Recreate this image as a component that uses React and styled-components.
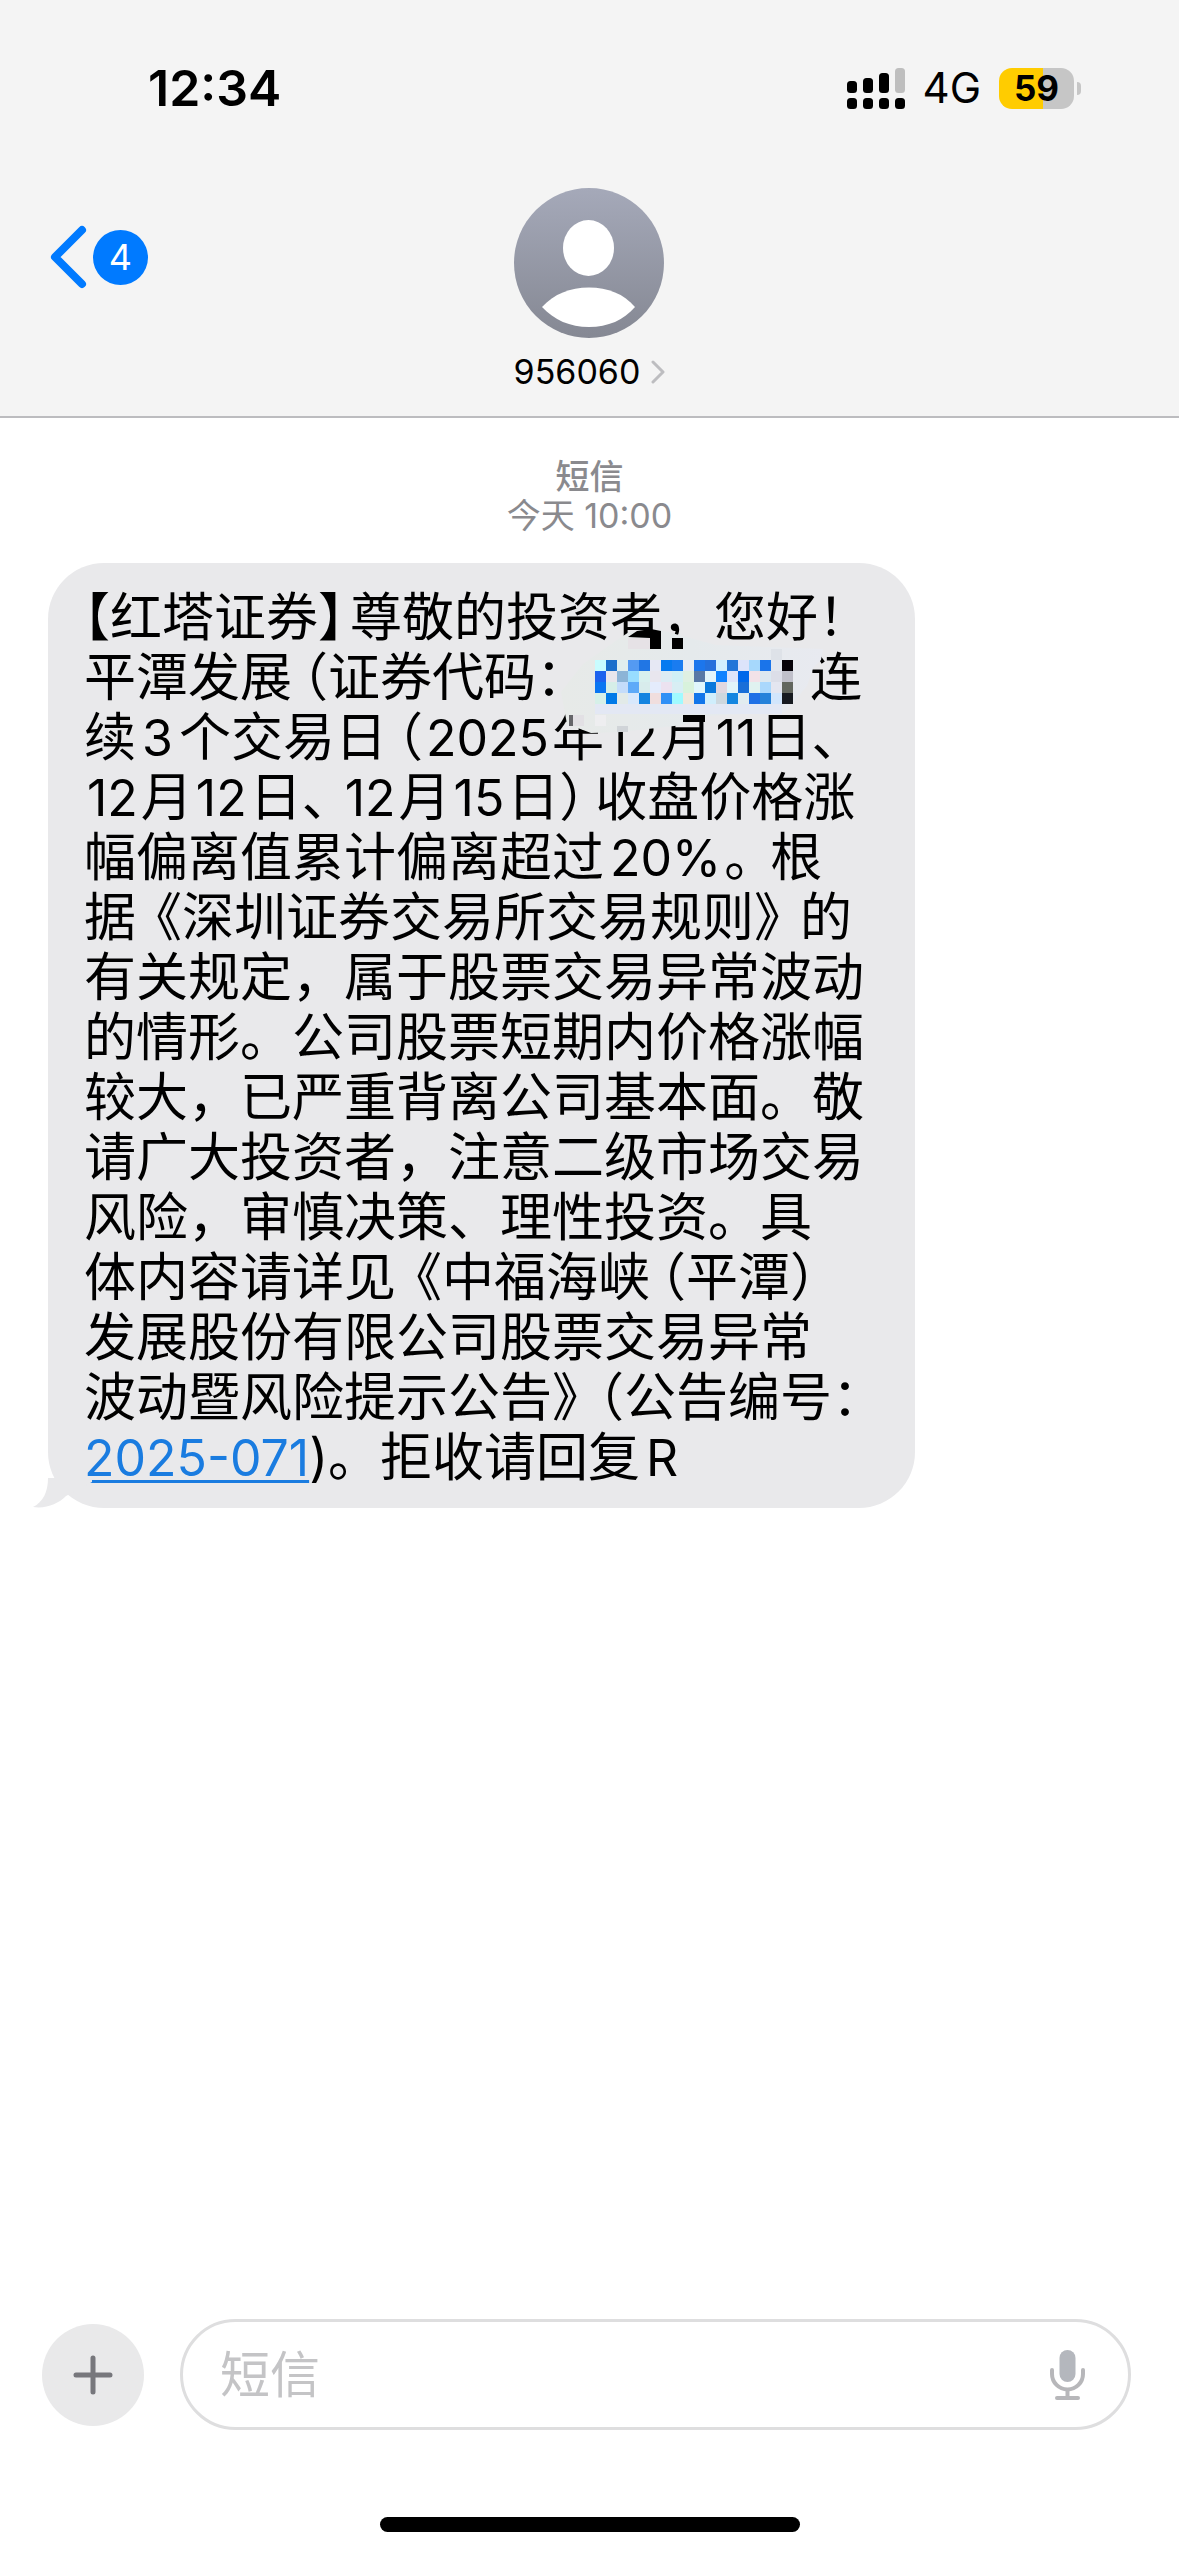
import React from 'react';
import styled, { createGlobalStyle } from 'styled-components';

const GlobalStyle = createGlobalStyle`
  * {
    box-sizing: border-box;
  }

  body {
    margin: 0;
    background: #FFFFFF;
    color: #000000;
    font-family: Inter, "Noto Sans CJK SC", sans-serif;
  }

  button, input {
    font: inherit;
    color: inherit;
  }
`;

const Screen = styled.div`
  min-height: 100vh;
  display: flex;
  flex-direction: column;
`;

const Header = styled.header`
  background: #F4F4F4;
  border-bottom: 2px solid #BCBCBF;
  padding-bottom: 24px;
`;

const StatusBar = styled.div`
  display: flex;
  align-items: center;
  justify-content: space-between;
  height: 176px;
  padding: 0 98px 0 148px;
`;

const Clock = styled.span`
  font-size: 50px;
  font-weight: 600;
`;

const StatusIcons = styled.div`
  display: flex;
  align-items: center;
  gap: 18px;
`;

const Network = styled.span`
  font-size: 42px;
  line-height: 42px;
`;

const BatteryWrap = styled.div`
  display: flex;
  align-items: center;
  gap: 3px;
`;

const BatteryBody = styled.div`
  width: 75px;
  height: 41px;
  border-radius: 13px;
  background: linear-gradient(to right, #FFCC00 59%, #C6C6C6 59%);
  font-size: 35px;
  font-weight: 700;
  line-height: 41px;
  text-align: center;
`;

const BatteryTip = styled.div`
  width: 4px;
  height: 13px;
  border-radius: 0 4px 4px 0;
  background: #C6C6C6;
`;

const NavBar = styled.div`
  display: grid;
  grid-template-columns: 1fr auto 1fr;
  align-items: start;
  padding: 12px 47px 0;
`;

const BackButton = styled.button`
  display: flex;
  align-items: center;
  gap: 5px;
  justify-self: start;
  margin-top: 36px;
  padding: 0;
  border: 0;
  background: none;
`;

const UnreadBadge = styled.span`
  width: 55px;
  height: 55px;
  border-radius: 50%;
  background: #007AFF;
  color: #FFFFFF;
  font-size: 36px;
  line-height: 55px;
  text-align: center;
`;

const Contact = styled.button`
  display: flex;
  flex-direction: column;
  align-items: center;
  gap: 14px;
  padding: 0;
  border: 0;
  background: none;
`;

const ContactName = styled.span`
  display: flex;
  align-items: center;
  gap: 11px;
  font-size: 34px;
  line-height: 40px;
`;

const Thread = styled.main`
  flex: 1;
  padding: 39px 48px 0;
`;

const Stamp = styled.div`
  color: #8A8A8E;
  font-size: 34px;
  line-height: 39px;
  text-align: center;
`;

const StampKind = styled.div`
  font-weight: 500;
`;

const Bubble = styled.div`
  position: relative;
  width: fit-content;
  margin-top: 28px;
  padding: 25px 31px 20px 36px;
  border-radius: 56px;
  background: #E9E9EB;
`;

const Tail = styled.svg`
  position: absolute;
  left: -16px;
  bottom: 0;
`;

const Message = styled.p`
  margin: 0;
  font-size: 52px;
  line-height: 60px;
`;

const Line = styled.span`
  display: block;
  height: 60px;
  white-space: nowrap;
`;

// punctuation set at half width
const Half = styled.span`
  font-feature-settings: "halt";
  padding-left: ${props => props.$before || 0}px;
  padding-right: ${props => props.$after || 0}px;
`;

const Latin = styled.span`
  padding-left: ${props => props.$before || 3}px;
  padding-right: ${props => props.$after || 3}px;
  font-size: 50px;
`;

const CodeLink = styled.a`
  color: #1A7CE0;
  font-size: 50px;
  text-decoration: underline;
  text-decoration-thickness: 3px;
  text-decoration-skip-ink: none;
  text-underline-offset: 4px;
`;

const Redacted = styled.span`
  position: relative;
  display: inline-block;
  width: 222px;
  height: 40px;
`;

const Mosaic = styled.svg`
  position: absolute;
  left: -27px;
  top: -36px;
`;

const Composer = styled.form`
  display: flex;
  align-items: center;
  gap: 36px;
  padding: 0 48px 0 42px;
`;

const PlusButton = styled.button`
  display: flex;
  align-items: center;
  justify-content: center;
  width: 102px;
  height: 102px;
  padding: 0;
  border: 0;
  border-radius: 50%;
  background: #E9E9EA;
`;

const Field = styled.div`
  flex: 1;
  display: flex;
  align-items: center;
  height: 111px;
  padding: 0 43px 0 37px;
  border: 3px solid #DEDEDF;
  border-radius: 56px;
`;

const TextInput = styled.input`
  flex: 1;
  min-width: 0;
  padding: 0;
  border: 0;
  outline: 0;
  background: none;
  font-size: 50px;

  &::placeholder {
    color: #C4C4C6;
    opacity: 1;
  }
`;

const MicButton = styled.button`
  display: flex;
  padding: 0;
  border: 0;
  background: none;
`;

const HomeIndicator = styled.div`
  width: 420px;
  height: 15px;
  margin: 87px auto 24px;
  border-radius: 8px;
  background: #000000;
`;

const tiles = [
  ['#C8FCFF', '#1B6FCB', '#E0EEEE', '#549AF2', '#2176E4', '#E6E8F4', '#067AF0', '#1A7CF0', '#E6ECF4', '#1C76EC', '#2470DC', '#D0F0FF', '#2276D8', '#DDE4FA', '#A6D8FC', '#1A74EA', '#E2E6EE', '#070309'],
  ['#1C62EE', '#E8E6EC', '#8CB4D6', '#98DDFF', '#D8F0EE', '#E8E6EE', '#DCECF4', '#D0F0F6', '#DFF0E2', '#5878A6', '#E4F4FA', '#0E82FF', '#DCE4FA', '#0068EA', '#F2E2E8', '#DCE8F0', '#DCDEE8', '#C0C0CA'],
  ['#0A76F2', '#D6EEE8', '#C4DCFA', '#5EAAF8', '#D8ECEC', '#E4ECFC', '#ECE2F0', '#D8EEF4', '#D8F2DC', '#E0F6FC', '#0A78DC', '#E0D8E0', '#E0F4FA', '#1A6FD8', '#E0F2F0', '#AAD8FC', '#E4E6F0', '#62665E'],
  ['#D6F0E8', '#007AE8', '#E2EAE8', '#D8E8FC', '#1484E0', '#F0DEDE', '#3090F6', '#A0FAFF', '#F0E8DC', '#1276EA', '#D0EEFC', '#CED8DE', '#1486E0', '#E2ECF0', '#1E70E6', '#2582DA', '#D2E6FC', '#171A20'],
];

function SignalIcon() {
  return (
    <svg width="58" height="41" viewBox="0 0 58 41" aria-hidden="true">
      <rect x="0" y="13" width="10" height="12" rx="3.5" />
      <rect x="16" y="10" width="10" height="15" rx="3.5" />
      <rect x="32" y="5" width="10" height="20" rx="3.5" />
      <rect x="48" y="0" width="10" height="25" rx="3.5" fill="#BEBEBE" />
      <rect x="0" y="30" width="10" height="11" rx="3.5" />
      <rect x="16" y="30" width="10" height="11" rx="3.5" />
      <rect x="32" y="30" width="10" height="11" rx="3.5" />
      <rect x="48" y="30" width="10" height="11" rx="3.5" />
    </svg>
  );
}

function Avatar() {
  return (
    <svg width="150" height="150" viewBox="0 0 150 150" aria-hidden="true">
      <defs>
        <linearGradient id="avatar" x1="0" y1="0" x2="0" y2="1">
          <stop offset="0" stopColor="#A5A9B9" />
          <stop offset="1" stopColor="#858893" />
        </linearGradient>
      </defs>
      <circle cx="75" cy="75" r="75" fill="url(#avatar)" />
      <ellipse cx="74.5" cy="60" rx="25.5" ry="28" fill="#FFFFFF" />
      <path d="M28 119C40 106 56 99.500 75 99.500S110 106 121 119C110 132 94 139 75 139S40 132 28 119Z" fill="#FFFFFF" />
    </svg>
  );
}

function Battery() {
  return (
    <BatteryWrap>
      <BatteryBody>59</BatteryBody>
      <BatteryTip />
    </BatteryWrap>
  );
}

function CodeMosaic() {
  return (
    <Redacted>
      <Mosaic width="280" height="124" viewBox="560 620 280 124" aria-hidden="true">
        <defs>
          <linearGradient id="smear" x1="0" y1="0" x2="1" y2="0">
            <stop offset="0" stopColor="#E7EAE8" />
            <stop offset="0.5" stopColor="#E5EAEC" />
            <stop offset="1" stopColor="#E8EAF0" />
          </linearGradient>
        </defs>
        <path d="M616 640L628 632L660 630L678 635L715 645L822 649L820 660L812 668L806 686L784 712L704 716L682 725L620 732L590 733L566 724L560 692L582 664Z" fill="url(#smear)" />
        <rect x="594" y="704" width="187" height="10" fill="#E3E8F4" />
        {tiles.map((row, r) => row.map((fill, c) => (
          <rect key={`${r}-${c}`} x={594 + c * 11} y={660 + r * 11} width="11" height="11" fill={fill} />
        )))}
        <rect x="627" y="638" width="22" height="11" fill="#E6E2E6" />
        <path d="M627 637L636 631L650 629L660 631V649H649V638Z" fill="#000000" />
        <rect x="671" y="638" width="11" height="11" fill="#000000" />
        <rect x="770" y="649" width="11" height="11" fill="#DEE2E8" />
        <rect x="682" y="715" width="22" height="7" fill="#000000" />
        <rect x="568" y="715" width="4" height="11" fill="#66666A" />
        <rect x="572" y="715" width="11" height="11" fill="#E2E0E4" />
        <rect x="594" y="715" width="11" height="11" fill="#EEEEF0" />
        <rect x="616" y="726" width="11" height="6" fill="#D0D4D8" />
      </Mosaic>
    </Redacted>
  );
}

function MessageBubble() {
  return (
    <Bubble>
      <Tail width="60" height="30" viewBox="0 0 60 30" aria-hidden="true">
        <path d="M16 0C16 14 11 24 1 29C14 31 26 26 34 18L60 4V0Z" fill="#E9E9EB" />
      </Tail>
      <Message>
        <Line><Half>【</Half>红塔证券<Half $after={6}>】</Half>尊敬的投资者，您好！</Line>
        <Line>平潭发展<Half $before={10}>（</Half>证券代码：<CodeMosaic />连</Line>
        <Line>续<Latin $before={6} $after={6}>3</Latin>个交易日<Half $before={10}>（</Half><Latin>2025</Latin>年<Latin>12</Latin>月<Latin>11</Latin>日、</Line>
        <Line><Latin>12</Latin>月<Latin>12</Latin>日<Half $after={14}>、</Half><Latin>12</Latin>月<Latin>15</Latin>日<Half $after={10}>）</Half>收盘价格涨</Line>
        <Line>幅偏离值累计偏离超过<Latin $before={6}>20%</Latin><Half $after={20}>。</Half>根</Line>
        <Line>据<Half $before={20}>《</Half>深圳证券交易所交易规则<Half $after={20}>》</Half>的</Line>
        <Line>有关规定，属于股票交易异常波动</Line>
        <Line>的情形。公司股票短期内价格涨幅</Line>
        <Line>较大，已严重背离公司基本面。敬</Line>
        <Line>请广大投资者，注意二级市场交易</Line>
        <Line>风险，审慎决策、理性投资。具</Line>
        <Line>体内容请详见<Half $before={20}>《</Half>中福海峡<Half $before={10}>（</Half>平潭<Half>）</Half></Line>
        <Line>发展股份有限公司股票交易异常</Line>
        <Line>波动暨风险提示公告<Half>》</Half><Half $before={20}>（</Half>公告编号：</Line>
        <Line><CodeLink href="#2025-071">2025-071</CodeLink>)。拒收请回复<Latin $before={6}>R</Latin></Line>
      </Message>
    </Bubble>
  );
}

function App() {
  return (
    <Screen>
      <GlobalStyle />
      <Header>
        <StatusBar>
          <Clock>12:34</Clock>
          <StatusIcons>
            <SignalIcon />
            <Network>4G</Network>
            <Battery />
          </StatusIcons>
        </StatusBar>
        <NavBar>
          <BackButton aria-label="返回">
            <svg width="41" height="66" viewBox="0 0 41 66" aria-hidden="true">
              <path d="M35 6L8 33L35 60" fill="none" stroke="#007AFF" strokeWidth="8" strokeLinecap="round" strokeLinejoin="round" />
            </svg>
            <UnreadBadge>4</UnreadBadge>
          </BackButton>
          <Contact>
            <Avatar />
            <ContactName>
              956060
              <svg width="14" height="24" viewBox="0 0 14 24" aria-hidden="true">
                <path d="M2 2L12 12L2 22" fill="none" stroke="#BDBDC0" strokeWidth="3" strokeLinecap="round" strokeLinejoin="round" />
              </svg>
            </ContactName>
          </Contact>
        </NavBar>
      </Header>
      <Thread>
        <Stamp>
          <StampKind>短信</StampKind>
          <div>今天 10:00</div>
        </Stamp>
        <MessageBubble />
      </Thread>
      <Composer>
        <PlusButton type="button" aria-label="添加">
          <svg width="40" height="40" viewBox="0 0 40 40" aria-hidden="true">
            <path d="M20 3V37M3 20H37" stroke="#77777C" strokeWidth="5" strokeLinecap="round" />
          </svg>
        </PlusButton>
        <Field>
          <TextInput type="text" placeholder="短信" aria-label="短信" />
          <MicButton type="button" aria-label="听写">
            <svg width="35" height="50" viewBox="0 0 35 50" aria-hidden="true">
              <rect x="9.5" y="0" width="16" height="32" rx="8" fill="#B4B7BD" />
              <path d="M2 20V24A15.500 15.500 0 0 0 33 24V20M17.500 39.500V48M7 48H28" fill="none" stroke="#B7B7BA" strokeWidth="4" strokeLinecap="round" />
            </svg>
          </MicButton>
        </Field>
      </Composer>
      <HomeIndicator />
    </Screen>
  );
}

export default App;
